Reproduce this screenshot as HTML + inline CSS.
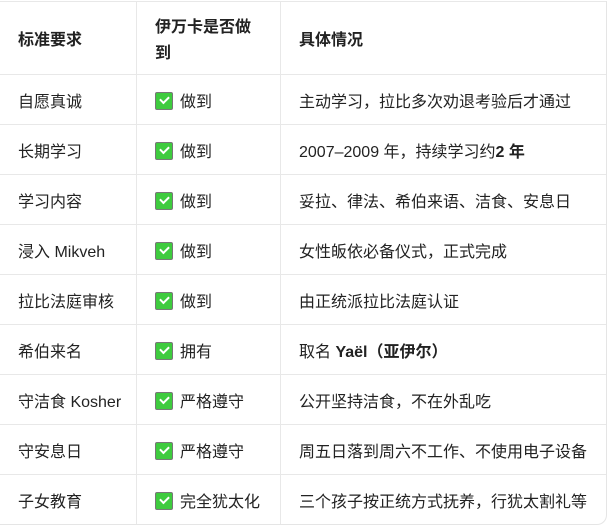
<!DOCTYPE html>
<html><head><meta charset="utf-8"><style>
html,body{margin:0;padding:0;background:#fff;width:607px;height:524px;overflow:hidden}
body{font-family:"Liberation Sans","Noto Sans CJK SC",sans-serif;font-size:16px;color:#222}
table{position:absolute;left:0;top:1px;border-collapse:separate;border-spacing:0;width:607px;border-right:1px solid #e5e5e5;border-bottom:1px solid #e5e5e5;border-bottom-right-radius:10px}
td,th{border-bottom:1px solid #e8e8e8;border-left:1px solid #e8e8e8;text-align:left;vertical-align:middle;padding:0 0 0 18px;height:49px}
tr:last-child td{border-bottom:none}
th{height:66px;padding-top:6px;font-weight:bold;border-top:1px solid #e8e8e8;line-height:26px}
td:first-child,th:first-child{border-left:none}
.c1{width:118px}.c2{width:125px}
.ck{display:inline-block;width:16px;height:16px;background:#3ecb3e;border:1px solid #777;border-radius:2px;vertical-align:-3px;margin-right:7px;position:relative}
.ck:after{content:"";position:absolute;left:4px;top:3px;width:7px;height:4px;border-left:2px solid #fff;border-bottom:2px solid #fff;transform:rotate(-45deg)}
</style></head><body>
<table>
<tr><th class="c1">标准要求</th><th class="c2">伊万卡是否做<br>到</th><th>具体情况</th></tr>
<tr><td>自愿真诚</td><td><span class="ck"></span>做到</td><td>主动学习，拉比多次劝退考验后才通过</td></tr>
<tr><td>长期学习</td><td><span class="ck"></span>做到</td><td>2007–2009 年，持续学习约<b>2 年</b></td></tr>
<tr><td>学习内容</td><td><span class="ck"></span>做到</td><td>妥拉、律法、希伯来语、洁食、安息日</td></tr>
<tr><td>浸入 Mikveh</td><td><span class="ck"></span>做到</td><td>女性皈依必备仪式，正式完成</td></tr>
<tr><td>拉比法庭审核</td><td><span class="ck"></span>做到</td><td>由正统派拉比法庭认证</td></tr>
<tr><td>希伯来名</td><td><span class="ck"></span>拥有</td><td>取名 <b>Yaël（亚伊尔）</b></td></tr>
<tr><td>守洁食 Kosher</td><td><span class="ck"></span>严格遵守</td><td>公开坚持洁食，不在外乱吃</td></tr>
<tr><td>守安息日</td><td><span class="ck"></span>严格遵守</td><td>周五日落到周六不工作、不使用电子设备</td></tr>
<tr><td>子女教育</td><td><span class="ck"></span>完全犹太化</td><td>三个孩子按正统方式抚养，行犹太割礼等</td></tr>
</table>
</body></html>
